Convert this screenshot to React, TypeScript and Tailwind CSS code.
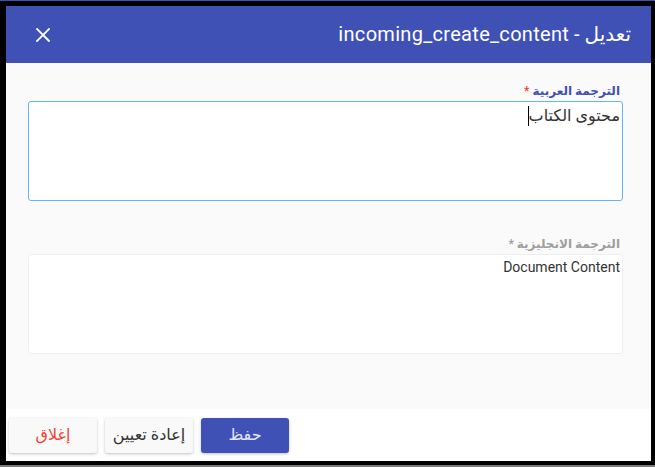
import React from "react";

export default function App() {
  return (
    <div className="w-[655px] h-[467px] bg-black relative overflow-hidden" style={{ fontFamily: "Roboto, 'DejaVu Sans', sans-serif" }}>
      <div className="absolute left-0 right-0 top-0 h-px bg-[#3f51b5]" />
      <div className="absolute left-0 right-0 bottom-0 h-[2px] bg-[#7a7a7a]" />
      <div className="absolute left-[6px] top-[6px] w-[645px] h-[455px] flex flex-col bg-white">
        <div className="h-[57px] bg-[#3f51b5] flex items-center justify-between pl-[30px] pr-[20px] shrink-0">
          <svg width="14" height="14" viewBox="0 0 14 14" className="mt-[1px]">
            <path d="M1 1 L13 13 M13 1 L1 13" stroke="white" strokeWidth="1.8" strokeLinecap="square" />
          </svg>
          <div dir="rtl" className="text-white text-[20px] leading-none mt-[-1px] tracking-[0.3px]">تعديل - incoming_create_content</div>
        </div>
        <div dir="rtl" className="flex-1 bg-[#fafafa] pr-[28px] pl-[22px] pt-[20px] flex flex-col">
          <div className="text-[12px] font-bold text-[#3f51b5] leading-[16px] h-[17px] mr-[3px]">
            الترجمة العربية <span className="text-[#f44336]">*</span>
          </div>
          <div className="mt-[1px] h-[100px] bg-white border border-[#64b5f6] rounded-[3px] px-[2px] pt-[3px] text-[16px] text-[#333] leading-[22px] flex">
            <span>محتوى الكتاب</span>
            <span className="inline-block w-px h-[20px] bg-black mt-[1px]" />
          </div>
          <div className="mt-[35px] text-[12px] font-bold text-[#9e9e9e] leading-[16px] h-[17px] mr-[3px]">
            الترجمة الانجليزية *
          </div>
          <div className="mt-[1px] h-[100px] bg-white border border-[#eeeeee] rounded-[3px] px-[2px] pt-[2px] text-[14px] text-[#333] leading-[20px]">
            Document Content
          </div>
        </div>
        <div className="h-[52px] bg-white flex items-center gap-[8px] pl-[3px] shrink-0">
          <button className="w-[88px] h-[35px] rounded-[3px] bg-[#f9f9f9] text-[#f44336] text-[16px] shadow-[0_1px_3px_rgba(0,0,0,0.25)]">إغلاق</button>
          <button className="w-[88px] h-[35px] rounded-[3px] bg-[#f9f9f9] text-[#333] text-[16px] shadow-[0_1px_3px_rgba(0,0,0,0.25)]">إعادة تعيين</button>
          <button className="w-[88px] h-[35px] rounded-[3px] bg-[#3f51b5] text-[#e3e6f5] text-[16px] shadow-[0_1px_3px_rgba(0,0,0,0.25)]">حفظ</button>
        </div>
      </div>
    </div>
  );
}
